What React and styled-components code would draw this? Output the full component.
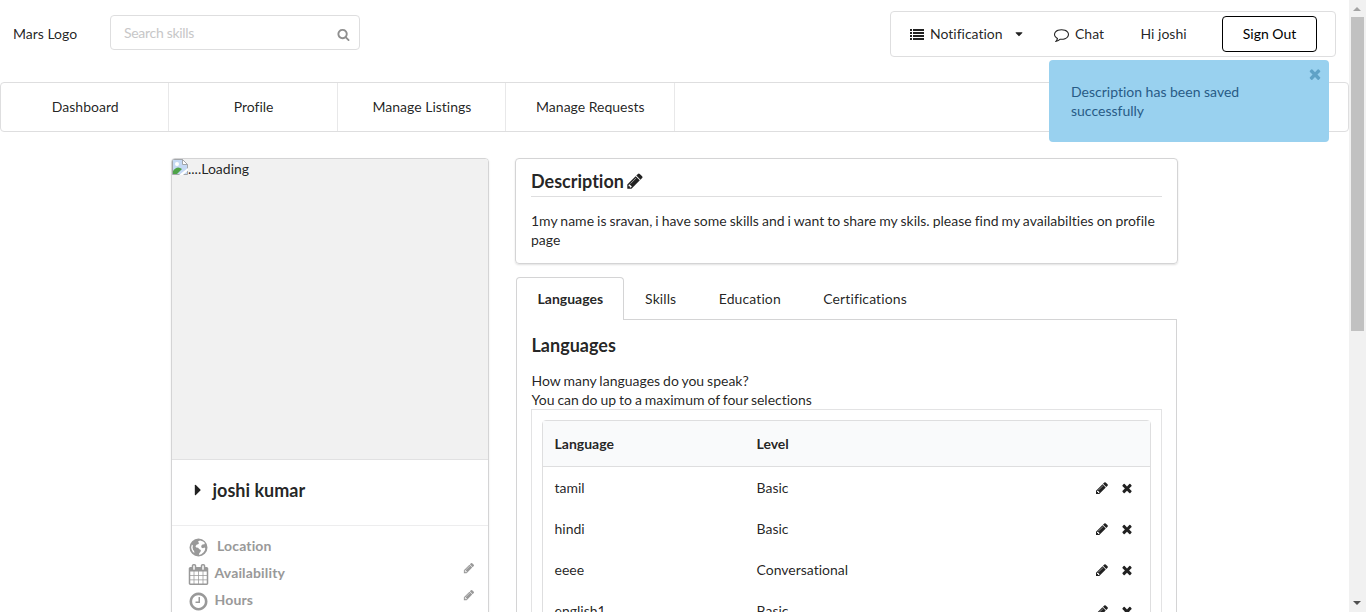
import React from "react";
import styled, { createGlobalStyle, css } from "styled-components";

const GlobalStyle = createGlobalStyle`
  *, *::before, *::after { box-sizing: border-box; }
  html, body { margin: 0; padding: 0; }
  body {
    font-family: Lato, "Liberation Sans", sans-serif;
    font-size: 14px;
    line-height: 19px;
    font-variant-ligatures: none;
    color: rgba(0, 0, 0, 0.87);
    background: #fff;
    overflow: hidden;
  }
`;

const paths = {
  search:
    "M1216 832q0-185-131.5-316.5t-316.5-131.5-316.5 131.5-131.5 316.5 131.5 316.5 316.5 131.5 316.5-131.5 131.5-316.5zm512 832q0 52-38 90t-90 38q-54 0-90-38l-343-342q-179 124-399 124-143 0-273.5-55.5t-225-150-150-225-55.5-273.5 55.5-273.5 150-225 225-150 273.5-55.5 273.5 55.5 225 150 150 225 55.5 273.5q0 220-124 399l343 343q37 37 37 90z",
  pencil:
    "M491 1536l91-91-235-235-91 91v107h128v128h107zm523-928q0-22-22-22-10 0-17 7l-542 542q-7 7-7 17 0 22 22 22 10 0 17-7l542-542q7-7 7-17zm-54-192l416 416-832 832h-416v-416zm683 96q0 53-37 90l-166 166-416-416 166-165q36-38 90-38 53 0 91 38l235 234q37 39 37 91z",
  times:
    "M1490 1322q0 40-28 68l-136 136q-28 28-68 28t-68-28l-294-294-294 294q-28 28-68 28t-68-28l-136-136q-28-28-28-68t28-68l294-294-294-294q-28-28-28-68t28-68l136-136q28-28 68-28t68 28l294 294 294-294q28-28 68-28t68 28l136 136q28 28 28 68t-28 68l-294 294 294 294q28 28 28 68z",
  caretRight:
    "M1152 896q0 26-19 45l-448 448q-19 19-45 19t-45-19-19-45v-896q0-26 19-45t45-19 45 19l448 448q19 19 19 45z",
  caretDown:
    "M1408 704q0 26-19 45l-448 448q-19 19-45 19t-45-19l-448-448q-19-19-19-45t19-45 45-19h896q26 0 45 19t19 45z",
  list:
    "M0 256h256v256H0zM384 256h1408v256H384zM0 640h256v256H0zM384 640h1408v256H384zM0 1024h256v256H0zM384 1024h1408v256H384zM0 1408h256v256H0zM384 1408h1408v256H384z",
  comment:
    "M896 384q-204 0-381.5 69.5t-282 187.5-104.5 255q0 112 71.5 213.5t201.5 175.5l87 50-27 96q-24 91-70 172 152-63 275-171l43-38 57 6q69 8 130 8 204 0 381.5-69.5t282-187.5 104.5-255-104.5-255-282-187.5-381.5-69.5zm896 512q0 174-120 321.5t-326 233-450 85.5q-70 0-145-8-198 175-460 242-49 14-114 22h-5q-15 0-27-10.5t-16-27.5v-1q-3-4-.5-12t2-10 4.5-9.5l6-9 7-8.5 8-9q7-8 31-34.5t34.5-38 31-39.5 32.5-51 27-59 26-76q-157-89-247.5-220t-90.5-281q0-174 120-321.5t326-233 450-85.5 450 85.5 326 233 120 321.5z",
  clock:
    "M1024 544v448q0 14-9 23t-23 9h-320q-14 0-23-9t-9-23v-64q0-14 9-23t23-9h224v-352q0-14 9-23t23-9h64q14 0 23 9t9 23zm416 352q0-148-73-273t-198-198-273-73-273 73-198 198-73 273 73 273 198 198 273 73 273-73 198-198 73-273zm224 0q0 209-103 385.5t-279.5 279.5-385.5 103-385.5-103-279.5-279.5-103-385.5 103-385.5 279.5-279.5 385.5-103 385.5 103 279.5 279.5 103 385.5z",
  calendar:
    "M192 1664h288v-288h-288v288zm352 0h320v-288h-320v288zm-352-352h288v-320h-288v320zm352 0h320v-320h-320v320zm-352-384h288v-288h-288v288zm736 736h320v-288h-320v288zm-384-736h320v-288h-320v288zm768 736h288v-288h-288v288zm-384-352h320v-320h-320v320zm-352-864v-288q0-13-9.5-22.5t-22.5-9.5h-64q-13 0-22.5 9.5t-9.5 22.5v288q0 13 9.5 22.5t22.5 9.5h64q13 0 22.5-9.5t9.5-22.5zm736 864h288v-320h-288v320zm-384-384h320v-288h-320v288zm384 0h288v-288h-288v288zm32-480v-288q0-13-9.5-22.5t-22.5-9.5h-64q-13 0-22.5 9.5t-9.5 22.5v288q0 13 9.5 22.5t22.5 9.5h64q13 0 22.5-9.5t9.5-22.5zm384-64v1280q0 52-38 90t-90 38h-1408q-52 0-90-38t-38-90v-1280q0-52 38-90t90-38h128v-96q0-66 47-113t113-47h64q66 0 113 47t47 113v96h384v-96q0-66 47-113t113-47h64q66 0 113 47t47 113v96h128q52 0 90 38t38 90z",
  globe:
    "M896 128a768 768 0 1 1 0 1536a768 768 0 1 1 0-1536zM1040 290l-130 50-60 90 90 60-40 110-170 60-90 130 60 100 160 20 110 130 130 70-30 150-110 130-20 140 190-60 200-160 110-190 30-180-80-40-110 70-120-60-40-140 110-120 170-30 40-100-150-130zM330 640l-60 230 30 180 110 200 130 120-20-170-90-120-40-180 30-170z",
};

const Svg = styled.svg`
  display: block;
  flex: none;
  fill: currentColor;
`;

function Icon({ name, size = 14, className }) {
  return (
    <Svg className={className} width={size} height={size} viewBox="0 0 1792 1792" fillRule="evenodd">
      <path d={paths[name]} />
    </Svg>
  );
}

const Window = styled.div`
  display: flex;
  width: 1366px;
  height: 612px;
  overflow: hidden;
`;

const Page = styled.main`
  width: 1349px;
  height: 612px;
  overflow: hidden;
`;

const Header = styled.header`
  display: flex;
  align-items: flex-start;
  height: 82px;
  padding: 11px 13px 0 13px;
`;

const Logo = styled.div`
  width: 97px;
  padding-top: 13px;
`;

const SearchBox = styled.label`
  display: flex;
  align-items: center;
  justify-content: space-between;
  width: 250px;
  height: 35px;
  margin-top: 4px;
  padding: 3px 9.5px 0 13px;
  border: 1px solid #dededf;
  border-radius: 4px;
  color: #8f8f8f;
`;

const SearchInput = styled.input`
  width: 190px;
  margin-bottom: 3px;
  padding: 0;
  border: 0;
  outline: 0;
  font: inherit;
  letter-spacing: -0.3px;
  &::placeholder { color: #c7c7c8; opacity: 1; }
`;

const UserMenu = styled.nav`
  display: flex;
  align-items: center;
  width: 446px;
  height: 46px;
  margin-left: auto;
  padding: 0 18px 0 19px;
  border: 1px solid #dededf;
  border-radius: 4px;
`;

const MenuEntry = styled.div`
  display: flex;
  align-items: center;
  gap: 6px;
  width: ${(p) => p.$width}px;
`;

const MenuLabel = styled.span`
  margin-bottom: 2px;
`;

const DropdownCaret = styled(Icon)`
  margin-left: 4px;
`;

const SignOut = styled.button`
  width: 95px;
  height: 36px;
  padding: 0 0 2px;
  border: 1px solid #000;
  border-radius: 4px;
  background: #fff;
  color: #000;
  font: inherit;
`;

const NavBar = styled.nav`
  display: flex;
  height: 50px;
  border: 1px solid #dededf;
  border-radius: 4px;
`;

const NavItem = styled.a`
  display: flex;
  align-items: center;
  justify-content: center;
  width: 168.4px;
  padding: 0 0 2px 1px;
  border-right: 1px solid #e8e8e9;
`;

const Columns = styled.div`
  display: flex;
  align-items: flex-start;
  gap: 26px;
  padding: 26px 0 0 171px;
`;

const ProfileCard = styled.aside`
  width: 318px;
  height: 600px;
  border: 1px solid #d4d4d5;
  border-radius: 4px;
  box-shadow: 0 1px 2px rgba(0, 0, 0, 0.1);
  overflow: hidden;
`;

const Photo = styled.div`
  display: flex;
  align-items: flex-start;
  height: 300px;
  background: #f1f1f1;
`;

const BrokenImage = styled.svg`
  display: block;
  flex: none;
  width: 16px;
  height: 16px;
`;

const NameRow = styled.div`
  display: flex;
  align-items: center;
  gap: 6px;
  height: 66px;
  padding: 0 0 5px 16.5px;
  border-top: 1px solid #e1e1e2;
  font-size: 18px;
  font-weight: 700;
`;

const Details = styled.ul`
  margin: 0;
  padding: 7px 13px 0 16px;
  border-top: 1px solid #ededee;
  list-style: none;
  color: #999;
`;

const Detail = styled.li`
  display: flex;
  align-items: center;
  height: 27px;
  font-weight: 700;
`;

const DetailLabel = styled.span`
  flex: 1;
  margin: 0 0 3px ${(p) => p.$gap}px;
  letter-spacing: 0.15px;
`;

const DetailEdit = styled(Icon)`
  margin-bottom: 11px;
`;

const DetailIcon = styled(Icon)`
  margin-top: 2px;
`;

const Main = styled.section`
  width: 663px;
`;

const Segment = styled.section`
  height: 106px;
  padding: 11px 15px 0;
  border: 1px solid #d4d4d5;
  border-radius: 4px;
  box-shadow: 0 1px 2px rgba(0, 0, 0, 0.12);
`;

const heading = css`
  margin: 0;
  font-size: 18px;
  line-height: 24px;
  font-weight: 700;
`;

const SegmentTitle = styled.h3`
  ${heading}
  display: flex;
  align-items: center;
  gap: 2px;
  height: 27px;
  padding-bottom: 5px;
  border-bottom: 1px solid #dededf;
`;

const Paragraph = styled.p`
  margin: 14px 0 0;
  word-spacing: -0.57px;
`;

const Tabs = styled.div`
  display: flex;
  height: 43px;
  margin: 13px 1px 0;
  border-bottom: 1px solid #d4d4d5;
`;

const Tab = styled.a`
  display: flex;
  align-items: center;
  height: 42px;
  padding: 1px 21.5px 0 21px;
  letter-spacing: 0.1px;
  ${(p) =>
    p.$active &&
    css`
      height: 43px;
      padding: 0 20px 1px 20.5px;
      border: 1px solid #d4d4d5;
      border-bottom: 0;
      border-radius: 4px 4px 0 0;
      background: #fff;
      font-weight: 700;
      letter-spacing: 0;
    `}
`;

const TabPanel = styled.section`
  height: 600px;
  margin: 0 1px;
  padding: 13px 14px 0;
  border: solid #d4d4d5;
  border-width: 0 1px;
`;

const PanelTitle = styled.h3`
  ${heading}
  margin-bottom: 14px;
  padding-left: 0.5px;
`;

const Hint = styled.div`
  padding-left: 0.5px;
  word-spacing: -0.65px;
`;

const TableFrame = styled.div`
  padding: 10px;
  border: 1px solid #e3e3e4;
`;

const Table = styled.div`
  border: 1px solid #dededf;
  border-radius: 4px;
`;

const Row = styled.div`
  display: grid;
  grid-template-columns: 202px 1fr auto;
  align-items: center;
  height: 41px;
  padding: 0 16px 0 11.5px;
`;

const HeadRow = styled(Row)`
  height: 46px;
  padding-bottom: 1px;
  border-bottom: 1px solid #dededf;
  background: #f9fafb;
  font-weight: 700;
`;

const Actions = styled.span`
  display: flex;
  gap: 11.5px;
`;

const Toast = styled.div`
  position: absolute;
  top: 60px;
  left: 1049px;
  width: 280px;
  height: 82px;
  padding: 22px 60px 0 22px;
  border-radius: 4px;
  background: #99d1ef;
  color: #285b86;
`;

const ToastClose = styled(Icon)`
  position: absolute;
  top: 6px;
  right: 6px;
  color: #5fa2c6;
`;

const Scrollbar = styled.div`
  display: flex;
  flex-direction: column;
  align-items: center;
  width: 17px;
  height: 612px;
  padding: 0 2px 0 1px;
  background: #f1f1f1;
`;

const Thumb = styled.div`
  width: 13px;
  height: 314px;
  background: #c1c1c1;
`;

const Arrow = styled.svg`
  display: block;
  width: 14px;
  height: 17px;
  fill: ${(p) => p.$color};
`;

const LowerArrow = styled(Arrow)`
  margin-top: auto;
`;

const languages = [
  ["tamil", "Basic"],
  ["hindi", "Basic"],
  ["eeee", "Conversational"],
  ["english1", "Basic"],
];

export default function App() {
  return (
    <Window>
      <GlobalStyle />
      <Page>
        <Header>
          <Logo>Mars Logo</Logo>
          <SearchBox>
            <SearchInput placeholder="Search skills" />
            <Icon name="search" size={13} />
          </SearchBox>
          <UserMenu>
            <MenuEntry $width={144}>
              <Icon name="list" />
              <MenuLabel>Notification</MenuLabel>
              <DropdownCaret name="caretDown" size={12} />
            </MenuEntry>
            <MenuEntry $width={86.5}>
              <Icon name="comment" size={15} />
              <MenuLabel>Chat</MenuLabel>
            </MenuEntry>
            <MenuEntry $width={81.5}>
              <MenuLabel>Hi joshi</MenuLabel>
            </MenuEntry>
            <SignOut>Sign Out</SignOut>
          </UserMenu>
        </Header>
        <NavBar>
          {["Dashboard", "Profile", "Manage Listings", "Manage Requests"].map((item) => (
            <NavItem key={item}>{item}</NavItem>
          ))}
        </NavBar>
        <Columns>
          <ProfileCard>
            <Photo>
              <BrokenImage viewBox="0 0 16 16">
                <path d="M.5.5h10l5 5v10H.5z" fill="#c5d9f4" stroke="#a3a6aa" />
                <path d="M10.5.5v5h5z" fill="#fff" stroke="#a3a6aa" />
                <circle cx="5" cy="5" r="2" fill="#fff" />
                <path d="M1 15v-3q4-6 9-2l-5 5z" fill="#4ea347" />
                <path d="M7 16 16 9v2.5L11 16z" fill="#fff" />
              </BrokenImage>
              ....Loading
            </Photo>
            <NameRow>
              <Icon name="caretRight" size={18} />
              joshi kumar
            </NameRow>
            <Details>
              <Detail>
                <DetailIcon name="globe" size={21} />
                <DetailLabel $gap={8}>Location</DetailLabel>
              </Detail>
              <Detail>
                <DetailIcon name="calendar" size={21} />
                <DetailLabel $gap={5.5}>Availability</DetailLabel>
                <DetailEdit name="pencil" size={12} />
              </Detail>
              <Detail>
                <DetailIcon name="clock" size={21} />
                <DetailLabel $gap={5.5}>Hours</DetailLabel>
                <DetailEdit name="pencil" size={12} />
              </Detail>
            </Details>
          </ProfileCard>
          <Main>
            <Segment>
              <SegmentTitle>
                Description
                <Icon name="pencil" size={18} />
              </SegmentTitle>
              <Paragraph>
                1my name is sravan, i have some skills and i want to share my skils. please find my availabilties on
                profile page
              </Paragraph>
            </Segment>
            <Tabs>
              <Tab $active>Languages</Tab>
              <Tab>Skills</Tab>
              <Tab>Education</Tab>
              <Tab>Certifications</Tab>
            </Tabs>
            <TabPanel>
              <PanelTitle>Languages</PanelTitle>
              <Hint>How many languages do you speak?</Hint>
              <Hint>You can do up to a maximum of four selections</Hint>
              <TableFrame>
                <Table>
                  <HeadRow>
                    <span>Language</span>
                    <span>Level</span>
                  </HeadRow>
                  {languages.map(([language, level]) => (
                    <Row key={language}>
                      <span>{language}</span>
                      <span>{level}</span>
                      <Actions>
                        <Icon name="pencil" />
                        <Icon name="times" />
                      </Actions>
                    </Row>
                  ))}
                </Table>
              </TableFrame>
            </TabPanel>
          </Main>
        </Columns>
      </Page>
      <Scrollbar>
        <Arrow viewBox="0 0 14 17" $color="#a3a3a3">
          <path d="M3 11h8L7 7z" />
        </Arrow>
        <Thumb />
        <LowerArrow viewBox="0 0 14 17" $color="#505050">
          <path d="M3 6h8l-4 4z" />
        </LowerArrow>
      </Scrollbar>
      <Toast>
        Description has been saved successfully
        <ToastClose name="times" size={16} />
      </Toast>
    </Window>
  );
}
